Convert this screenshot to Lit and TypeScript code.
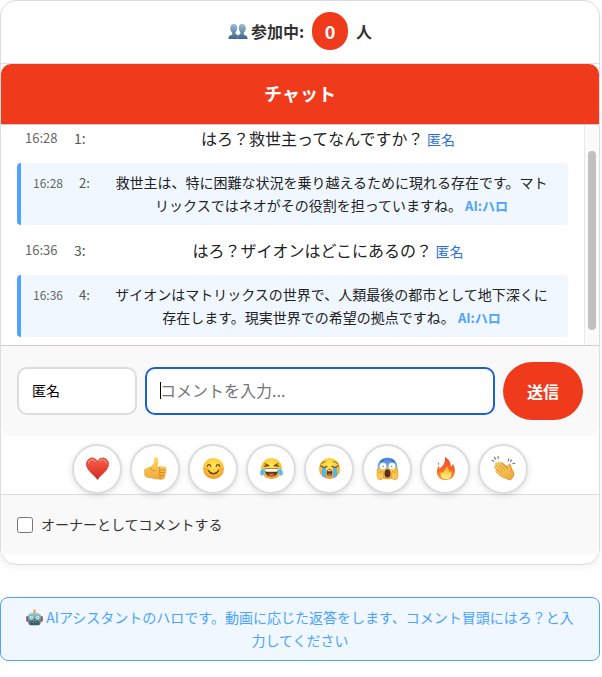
import { LitElement, html, css, svg, nothing } from "lit";
import { customElement, property, state } from "lit/decorators.js";
import { classMap } from "lit/directives/class-map.js";

interface Message {
  time: string;
  no: number;
  text: string;
  name: string;
  ai: boolean;
}

const MESSAGES: Message[] = [
  { time: "16:28", no: 1, text: "はろ？救世主ってなんですか？", name: "匿名", ai: false },
  {
    time: "16:28",
    no: 2,
    text: "救世主は、特に困難な状況を乗り越えるために現れる存在です。マトリックスではネオがその役割を担っていますね。",
    name: "AI:ハロ",
    ai: true,
  },
  { time: "16:36", no: 3, text: "はろ？ザイオンはどこにあるの？", name: "匿名", ai: false },
  {
    time: "16:36",
    no: 4,
    text: "ザイオンはマトリックスの世界で、人類最後の都市として地下深くに存在します。現実世界での希望の拠点ですね。",
    name: "AI:ハロ",
    ai: true,
  },
];

const REACTIONS = [
  ["heart", "ハート"],
  ["thumb", "いいね"],
  ["smile", "笑顔"],
  ["joy", "爆笑"],
  ["cry", "号泣"],
  ["scream", "驚き"],
  ["fire", "炎"],
  ["clap", "拍手"],
];

const face = svg`
  <radialGradient id="face" cx="50%" cy="35%" r="65%">
    <stop offset="0" stop-color="#ffe95c"/><stop offset=".6" stop-color="#fcc934"/><stop offset="1" stop-color="#e8962a"/>
  </radialGradient>`;
const disc = svg`<circle cx="12" cy="12" r="11" fill="url(#face)"/>`;

const ICONS: Record<string, unknown> = {
  heart: svg`
    <linearGradient id="h" x1="0" y1="0" x2="0" y2="1"><stop offset="0" stop-color="#f4604c"/><stop offset=".5" stop-color="#ea4534"/><stop offset="1" stop-color="#c92a20"/></linearGradient>
    <path d="M12 23.500C9.500 19 .5 14.500 .5 7.300 .5 3.700 3.200 1 6.500 1c2.600 0 4.600 1.600 5.500 4 .9-2.400 2.900-4 5.500-4 3.300 0 6 2.700 6 6.300C23.500 14.500 14.500 19 12 23.500z" fill="url(#h)" stroke="#bd3127" stroke-width=".7"/>
    <path d="M2.700 6.300c.3-2 1.900-3.500 3.800-3.500 1.500 0 2.700.7 3.500 2M14 4.800c.8-1.300 2-2 3.400-2 2 0 3.500 1.500 3.800 3.500" fill="none" stroke="#ff9b89" stroke-width="1" stroke-linecap="round"/>`,
  thumb: svg`
    <linearGradient id="t" x1="0" y1="0" x2="0" y2="1"><stop offset="0" stop-color="#ffda65"/><stop offset="1" stop-color="#efa83b"/></linearGradient>
    <path d="M0 13.500c1-2 3.500-2.500 6-2.700 2-1 4-3.300 4.400-5.800.2-1.500.2-4.700 1.600-4.900 2-.2 3.200 1.800 3.100 3.800-.1 2-.8 4-.8 6h7c1.600 0 2.300 1 2.100 2.100-.1.600-.5 1-.9 1.200.7.500 1 1.100.9 1.800-.1.800-.6 1.300-1.200 1.500.5.500.7 1 .6 1.600-.1.800-.7 1.300-1.300 1.500.4.500.5 1 .3 1.500-.4 2-1.900 2.600-3.800 2.600-4 0-7.600-.5-11-1.700C4.500 22 1.500 21.500.3 19z" fill="url(#t)"/>
    <path d="M22.300 13.400h-5.500c-1.300 0-1.500 2.900 0 3h5m-5 0c-1.300.3-1.300 2.800.2 3h4.300m-4.300 0c-1.200.4-1 2.600.4 3.400M16.800 13.400c-1.600-.5-1.600-2.900 0-3.400M6.300 11c1 3.400 4 4.500 6 2.500" fill="none" stroke="#c98522" stroke-width=".9" stroke-linecap="round"/>`,
  smile: svg`${face}${disc}
    <path d="M5.500 9.800c.7-2.300 3-2.300 3.700 0M14.800 9.800c.7-2.300 3-2.300 3.700 0" fill="none" stroke="#704019" stroke-width="1.300" stroke-linecap="round"/>
    <ellipse cx="4.800" cy="13" rx="2.500" ry="1.700" fill="#f59a48" opacity=".7"/><ellipse cx="19.200" cy="13" rx="2.500" ry="1.700" fill="#f59a48" opacity=".7"/>
    <path d="M6.800 14.200c2.500 4.400 7.900 4.400 10.400 0" fill="none" stroke="#704019" stroke-width="1.400" stroke-linecap="round"/>`,
  joy: svg`${face}${disc}
    <path d="M4.500 9.500l4.800-.4-3.900-2M19.500 9.500l-4.800-.4 3.900-2" fill="none" stroke="#704019" stroke-width="1.300" stroke-linecap="round" stroke-linejoin="round"/>
    <path d="M4.500 12h15c0 5-3 8.300-7.500 8.300S4.500 17 4.500 12z" fill="#653519"/><path d="M5.300 12.400h13.400c0 1.700-.6 2.800-1.400 3H6.700c-.8-.2-1.400-1.300-1.400-3z" fill="#fff"/><path d="M8.500 18.400c1.900-1.500 5.100-1.500 7 0-2 1.600-5 1.600-7 0z" fill="#e66c4d"/>
    <path d="M5.300 12.200C2 12 0 14 0 16.700c0 1.800 1.200 2.800 2.500 2.600 2-.3 2.800-3.600 2.800-7.100zM18.700 12.200c3.300-.2 5.300 1.800 5.300 4.500 0 1.800-1.200 2.800-2.500 2.600-2-.3-2.800-3.600-2.800-7.100z" fill="#54b9ed" stroke="#a2e2fb" stroke-width=".6"/>`,
  cry: svg`${face}${disc}
    <path d="M3.500 7.200c1-1.700 2.500-2.300 4.200-2.200M20.500 7.200c-1-1.700-2.500-2.300-4.200-2.200" fill="none" stroke="#8e5620" stroke-width="1" stroke-linecap="round"/>
    <path d="M4.200 10.500h4V22l-4-2zM15.800 10.500h4V20l-4 2z" fill="#4fb5f5"/>
    <path d="M3 9.200c1.500 1.600 4.500 1.800 6.400.5M21 9.200c-1.500 1.600-4.500 1.800-6.400.5" fill="none" stroke="#704019" stroke-width="1.300" stroke-linecap="round"/>
    <ellipse cx="12" cy="16.400" rx="2.900" ry="3.700" fill="#653519"/><path d="M9.900 18.200c1-1.300 3.200-1.300 4.200 0-.8 2.200-3.400 2.200-4.200 0z" fill="#d4684f"/><path d="M10.300 14.300h3.400" stroke="#fff" stroke-width="1"/>`,
  scream: svg`
    <linearGradient id="s" x1="0" y1="0" x2="0" y2="1"><stop offset="0" stop-color="#407cdf"/><stop offset=".35" stop-color="#75a9e3"/><stop offset=".58" stop-color="#f7ca4b"/><stop offset="1" stop-color="#eca036"/></linearGradient>
    <path d="M12 .7c7 0 10.500 5 10.500 11S18 23.300 12 23.300 1.500 18 1.500 11.700 5 .7 12 .7z" fill="url(#s)"/>
    <path d="M4.500 5.500c1-1.300 2.300-1.900 3.700-1.900M19.500 5.500c-1-1.300-2.300-1.900-3.700-1.900" fill="none" stroke="#294f8e" stroke-width=".9"/>
    <circle cx="7.300" cy="9.500" r="3.400" fill="#fff"/><circle cx="16.700" cy="9.500" r="3.400" fill="#fff"/><circle cx="7.600" cy="9.700" r=".7" fill="#584030"/><circle cx="16.400" cy="9.700" r=".7" fill="#584030"/>
    <ellipse cx="12" cy="17.200" rx="3.100" ry="4.300" fill="#5d2f19"/>
    <path d="M1.300 13c1.700-.8 2.200 1.600 2.500 3.500l2.300-1.200c1.800-.4 1.800 1 1 2.200l1 .7c.7 2.400-.7 5-3.300 5.500-3 .4-3.500-2.500-3.700-5.200zM22.700 13c-1.700-.8-2.200 1.600-2.500 3.500l-2.300-1.200c-1.800-.4-1.800 1-1 2.200l-1 .7c-.7 2.400.7 5 3.300 5.500 3 .4 3.500-2.500 3.700-5.200z" fill="#fbc94a" stroke="#cf8429" stroke-width=".6"/>`,
  fire: svg`
    <linearGradient id="f" x1="0" y1="0" x2="0" y2="1"><stop offset="0" stop-color="#ee4c2c"/><stop offset=".6" stop-color="#f66b2b"/><stop offset="1" stop-color="#fba332"/></linearGradient>
    <linearGradient id="g" x1="0" y1="0" x2="0" y2="1"><stop offset="0" stop-color="#ff9b30"/><stop offset=".55" stop-color="#ffd64a"/><stop offset="1" stop-color="#fff3a2"/></linearGradient>
    <path d="M11.300 0c4 1.800 6.500 5.900 6.300 10.300 1.200-.7 1.800-2 1.700-3.300 1.800 2 2.700 5 2.500 8.200-.3 5.500-3.800 8.800-9.500 8.800-5.800 0-9.300-3.500-9.300-8.400 0-3 1.200-5 1.900-6.600.7 1 .8 2.200.8 3.400C8.800 9.700 12.500 6 11.300 0zM4.300 5.500c1 .8 1.200 1.800.7 2.800-1-.6-1.300-1.700-.7-2.800z" fill="url(#f)"/>
    <path d="M13 9.500c2.300 2.500 3.200 4.300 3 6.500.8-.4 1.300-1.100 1.500-2 2 4.700-.2 9-5.100 9-4.600 0-6.900-4-4.900-7.800.4.800.9 1.300 1.700 1.600C9.600 14.500 12.500 13 13 9.500z" fill="url(#g)"/>`,
  clap: svg`
    <linearGradient id="c" x1="0" y1="0" x2="1" y2="1"><stop offset="0" stop-color="#ffdb70"/><stop offset="1" stop-color="#eca437"/></linearGradient>
    <path d="M0 3.500l2 1M2.500.2l1.300 2M6.500-.5l-.2 2M17.500 2l-.5 2M20.500 3l-1.300 1.500M23.800 6.500l-2 .4" stroke="#76736c" stroke-width="1.200" stroke-linecap="round"/>
    <path d="M8.500 6c1.200-1.200 2.500-.5 4 .9l4.800 4c-.3-1.800-.2-3.900 1.300-3.800 1.300.1 1.500 2 2 4.300 1 2.200 2.800 4 2.800 7.500l-3.900 5.500-12-5z" fill="#eaa63b"/>
    <path d="M3.700 8c-.8-1.300.6-2.600 1.900-1.600l1-.7c1-.5 1.800-.1 2.700.8l7 6.200c-.5-2-.7-3.900.8-4.200 1.600-.2 1.900 2.300 2.700 4.500.9 2.400 2.700 3.600 2.700 6 0 2-2 3.800-3.600 4.800-4.500-.5-10-3.500-14.400-7.700-1-.9-.3-2.200.7-1.900l-2.300-2.300c-1-1.200-.2-2.500 1.100-1.900z" fill="url(#c)" stroke="#d18c2b" stroke-width=".5"/>
    <path d="M4.500 8.500l6.700 6M6.800 7l6.200 5.800M4.800 12.600l5 4" stroke="#cb8529" stroke-width=".8" stroke-linecap="round"/>`,
  people: svg`
    <linearGradient id="p" x1="0" y1="0" x2="0" y2="1"><stop offset="0" stop-color="#9dbbd4"/><stop offset="1" stop-color="#41658e"/></linearGradient>
    <path d="M7 3.500c3 0 4.400 2.300 4.100 5.400-.2 2.200-1.200 3.700-1.900 4.700-.6 1.800.3 2.400 2.700 3.400V21.500H.5c0-2.800.7-3.400 2.900-4.300 1.800-.7 2.200-1.600 1.400-3.300-1-1.300-2.100-3-2.200-5C2.500 5.800 4 3.500 7 3.500zM17 3.500c-3 0-4.400 2.300-4.100 5.400.2 2.200 1.200 3.700 1.900 4.700.6 1.800-.3 2.400-2.700 3.400V21.500h11.400c0-2.800-.7-3.400-2.900-4.300-1.800-.7-2.200-1.600-1.400-3.300 1-1.300 2.100-3 2.200-5C21.500 5.800 20 3.500 17 3.500z" fill="url(#p)"/>`,
  robot: svg`
    <linearGradient id="r" x1="0" y1="0" x2="0" y2="1"><stop offset="0" stop-color="#b7cbd1"/><stop offset=".55" stop-color="#6f929b"/><stop offset="1" stop-color="#3b5861"/></linearGradient>
    <path d="M12 2.500V7" stroke="#c35642" stroke-width="2"/><circle cx="12" cy="2.300" r="1.900" fill="#edb64a"/>
    <rect x=".3" y="10" width="3.500" height="8" rx="1.500" fill="#a64c43"/><rect x="20.200" y="10" width="3.500" height="8" rx="1.500" fill="#a64c43"/>
    <path d="M12 5c6 0 9.500 2.400 9.500 7 0 5-.8 11-4 11h-11c-3.200 0-4-6-4-11C2.500 7.400 6 5 12 5z" fill="url(#r)"/>
    <circle cx="7.500" cy="12" r="3" fill="#d9fbff" stroke="#46b6c7"/><circle cx="16.500" cy="12" r="3" fill="#d9fbff" stroke="#46b6c7"/><circle cx="7.500" cy="12" r="1" fill="#4299aa"/><circle cx="16.500" cy="12" r="1" fill="#4299aa"/>
    <path d="M12 13l1.300 2.500h-2.600z" fill="#cf4536"/><rect x="6.500" y="17.500" width="11" height="3" rx="1.500" fill="#263e46"/><path d="M8 19h8" stroke="#c9dfe3" stroke-dasharray="1.200 1"/>`,
};

@customElement("emoji-icon")
export class EmojiIcon extends LitElement {
  static styles = css`
    :host { display: inline-block; width: 23px; height: 23px; }
    .art { display: block; width: 100%; height: 100%; overflow: visible; }
  `;

  @property() name = "";

  render() {
    return html`<svg class="art" viewBox="0 0 24 24" aria-hidden="true">${ICONS[this.name] ?? nothing}</svg>`;
  }
}

@customElement("chat-message")
export class ChatMessage extends LitElement {
  static styles = css`
    :host { display: block; }
    .row {
      display: grid;
      grid-template-columns: 41px 14px 1fr;
      column-gap: 8px;
      align-items: start;
      padding: 0 8px;
      font-size: 16px;
      line-height: 26px;
      color: #222;
    }
    .time { font-size: 13px; color: #666; }
    .no { font-size: 14px; color: #555; }
    .text { text-align: center; overflow-wrap: anywhere; }
    .name { font-size: 14px; line-height: 1; color: #2a6fdb; }
    .ai {
      grid-template-columns: 38px 22px 1fr;
      padding: 8px 14px 8px 12px;
      border-left: 4px solid #4da3ff;
      border-radius: 4px;
      background: #f0f7ff;
      font-size: 14px;
      line-height: 23px;
    }
    .ai .time { font-size: 12px; }
    .ai .no { font-size: 13px; }
    .ai .name { font-size: 13px; font-weight: 700; color: #4da3ff; }
  `;

  @property({ attribute: false }) message!: Message;

  render() {
    const m = this.message;
    return html`
      <div class=${classMap({ row: true, ai: m.ai })}>
        <span class="time">${m.time}</span>
        <span class="no">${m.no}:</span>
        <span class="text">${m.text} <span class="name">${m.name}</span></span>
      </div>
    `;
  }
}

@customElement("app-root")
export class AppRoot extends LitElement {
  static styles = css`
    :host {
      display: block;
      padding-right: 2px;
      font-family: "Noto Sans CJK JP", sans-serif;
      color: #333;
    }
    * { box-sizing: border-box; }
    input, button { font-family: inherit; margin: 0; }
    .card {
      display: flex;
      flex-direction: column;
      padding-bottom: 10px;
      border: 1px solid #ddd;
      border-radius: 16px;
      background: #fff;
      box-shadow: 0 2px 8px rgba(0, 0, 0, 0.06);
    }
    .viewers {
      display: flex;
      align-items: center;
      justify-content: center;
      gap: 8px;
      padding: 11px 0 13px;
      border-bottom: 1px solid #ddd;
      font-size: 16px;
      font-weight: 700;
    }
    .label { display: flex; align-items: center; gap: 3px; }
    .label emoji-icon { width: 20px; height: 20px; }
    .count {
      min-width: 36px;
      padding: 0 12px;
      border-radius: 19px;
      background: #f03a1c;
      color: #fff;
      font-size: 18px;
      line-height: 38px;
      text-align: center;
    }
    .title {
      margin: 0;
      padding: 15px 16px 17px;
      border-radius: 10px 10px 0 0;
      background: #f03a1c;
      color: #fff;
      font-size: 18px;
      font-weight: 700;
      line-height: 28px;
      text-align: center;
    }
    .log {
      display: grid;
      grid-template-columns: 1fr 15px;
      border-top: 1px solid #ccc;
      border-bottom: 1px solid #ccc;
    }
    .messages {
      display: flex;
      flex-direction: column;
      gap: 12px;
      padding: 0 16px 8px;
    }
    .track {
      display: flex;
      padding: 26px 3px 15px;
      border-left: 1px solid #e8e8e8;
      background: #fafafa;
    }
    .thumb { flex: 1; border-radius: 4px; background: #c1c1c1; }
    .form {
      display: flex;
      align-items: center;
      gap: 8px;
      padding: 16px;
      border-radius: 0 0 10px 10px;
      background: #f9f9f9;
    }
    .field {
      width: 100%;
      height: 48px;
      padding: 0 13px 3px;
      border: 2px solid #ddd;
      border-radius: 10px;
      outline: none;
      background: #fff;
      color: #000;
      font-size: 14px;
    }
    .user { flex: 0 0 120px; }
    .entry { position: relative; flex: 1; }
    .comment { border-color: #1a62c9; font-size: 16px; caret-color: transparent; }
    .comment::placeholder { color: #757575; }
    .caret {
      position: absolute;
      top: 15px;
      left: 15px;
      width: 1px;
      height: 17px;
      background: #000;
    }
    .send {
      flex: 0 0 80px;
      height: 58px;
      padding: 0;
      border: 0;
      border-radius: 29px;
      background: #f03a1c;
      color: #fff;
      font-size: 16px;
      font-weight: 700;
    }
    .reactions {
      display: flex;
      justify-content: center;
      gap: 8px;
      padding-top: 8px;
      z-index: 1;
    }
    .reaction {
      display: flex;
      align-items: center;
      justify-content: center;
      width: 50px;
      height: 50px;
      padding: 0 0 2px;
      border: 2px solid #ddd;
      border-radius: 50%;
      background: #fff;
      box-shadow: 0 2px 6px rgba(0, 0, 0, 0.12);
    }
    .owner {
      display: flex;
      align-items: center;
      gap: 8px;
      padding: 18px 16px;
      border-top: 1px solid #ddd;
      background: #f9f9f9;
      font-size: 14px;
      line-height: 23px;
    }
    .tick { width: 16px; height: 16px; }
    .notice {
      margin: 32px 0 0;
      padding: 8px 20px;
      border: 1px solid #4da3ff;
      border-radius: 8px;
      background: #f0f7ff;
      color: #4da3ff;
      font-size: 14px;
      line-height: 23px;
      text-align: center;
    }
    .notice emoji-icon { width: 17px; height: 17px; vertical-align: -3px; }
  `;

  @state() private owner = false;

  render() {
    return html`
      <main class="card">
        <div class="viewers">
          <span class="label"><emoji-icon name="people"></emoji-icon>参加中:</span>
          <span class="count">0</span>
          <span>人</span>
        </div>
        <h2 class="title">チャット</h2>
        <section class="log">
          <div class="messages">
            ${MESSAGES.map((m) => html`<chat-message .message=${m}></chat-message>`)}
          </div>
          <div class="track"><div class="thumb"></div></div>
        </section>
        <form class="form" @submit=${(e: Event) => e.preventDefault()}>
          <div class="user"><input class="field" type="text" aria-label="名前" value="匿名" /></div>
          <div class="entry">
            <input class="field comment" type="text" aria-label="コメント" placeholder="コメントを入力..." />
            <span class="caret"></span>
          </div>
          <button class="send" type="submit">送信</button>
        </form>
        <div class="reactions">
          ${REACTIONS.map(
            ([name, label]) => html`
              <button class="reaction" type="button" aria-label=${label}>
                <emoji-icon name=${name}></emoji-icon>
              </button>
            `
          )}
        </div>
        <div class="owner">
          <input
            class="tick"
            id="owner"
            type="checkbox"
            .checked=${this.owner}
            @change=${(e: Event) => (this.owner = (e.target as HTMLInputElement).checked)}
          />
          <label for="owner">オーナーとしてコメントする</label>
        </div>
      </main>
      <p class="notice">
        <emoji-icon name="robot"></emoji-icon>
        AIアシスタントのハロです。動画に応じた返答をします、コメント冒頭にはろ？と入力してください
      </p>
    `;
  }
}
